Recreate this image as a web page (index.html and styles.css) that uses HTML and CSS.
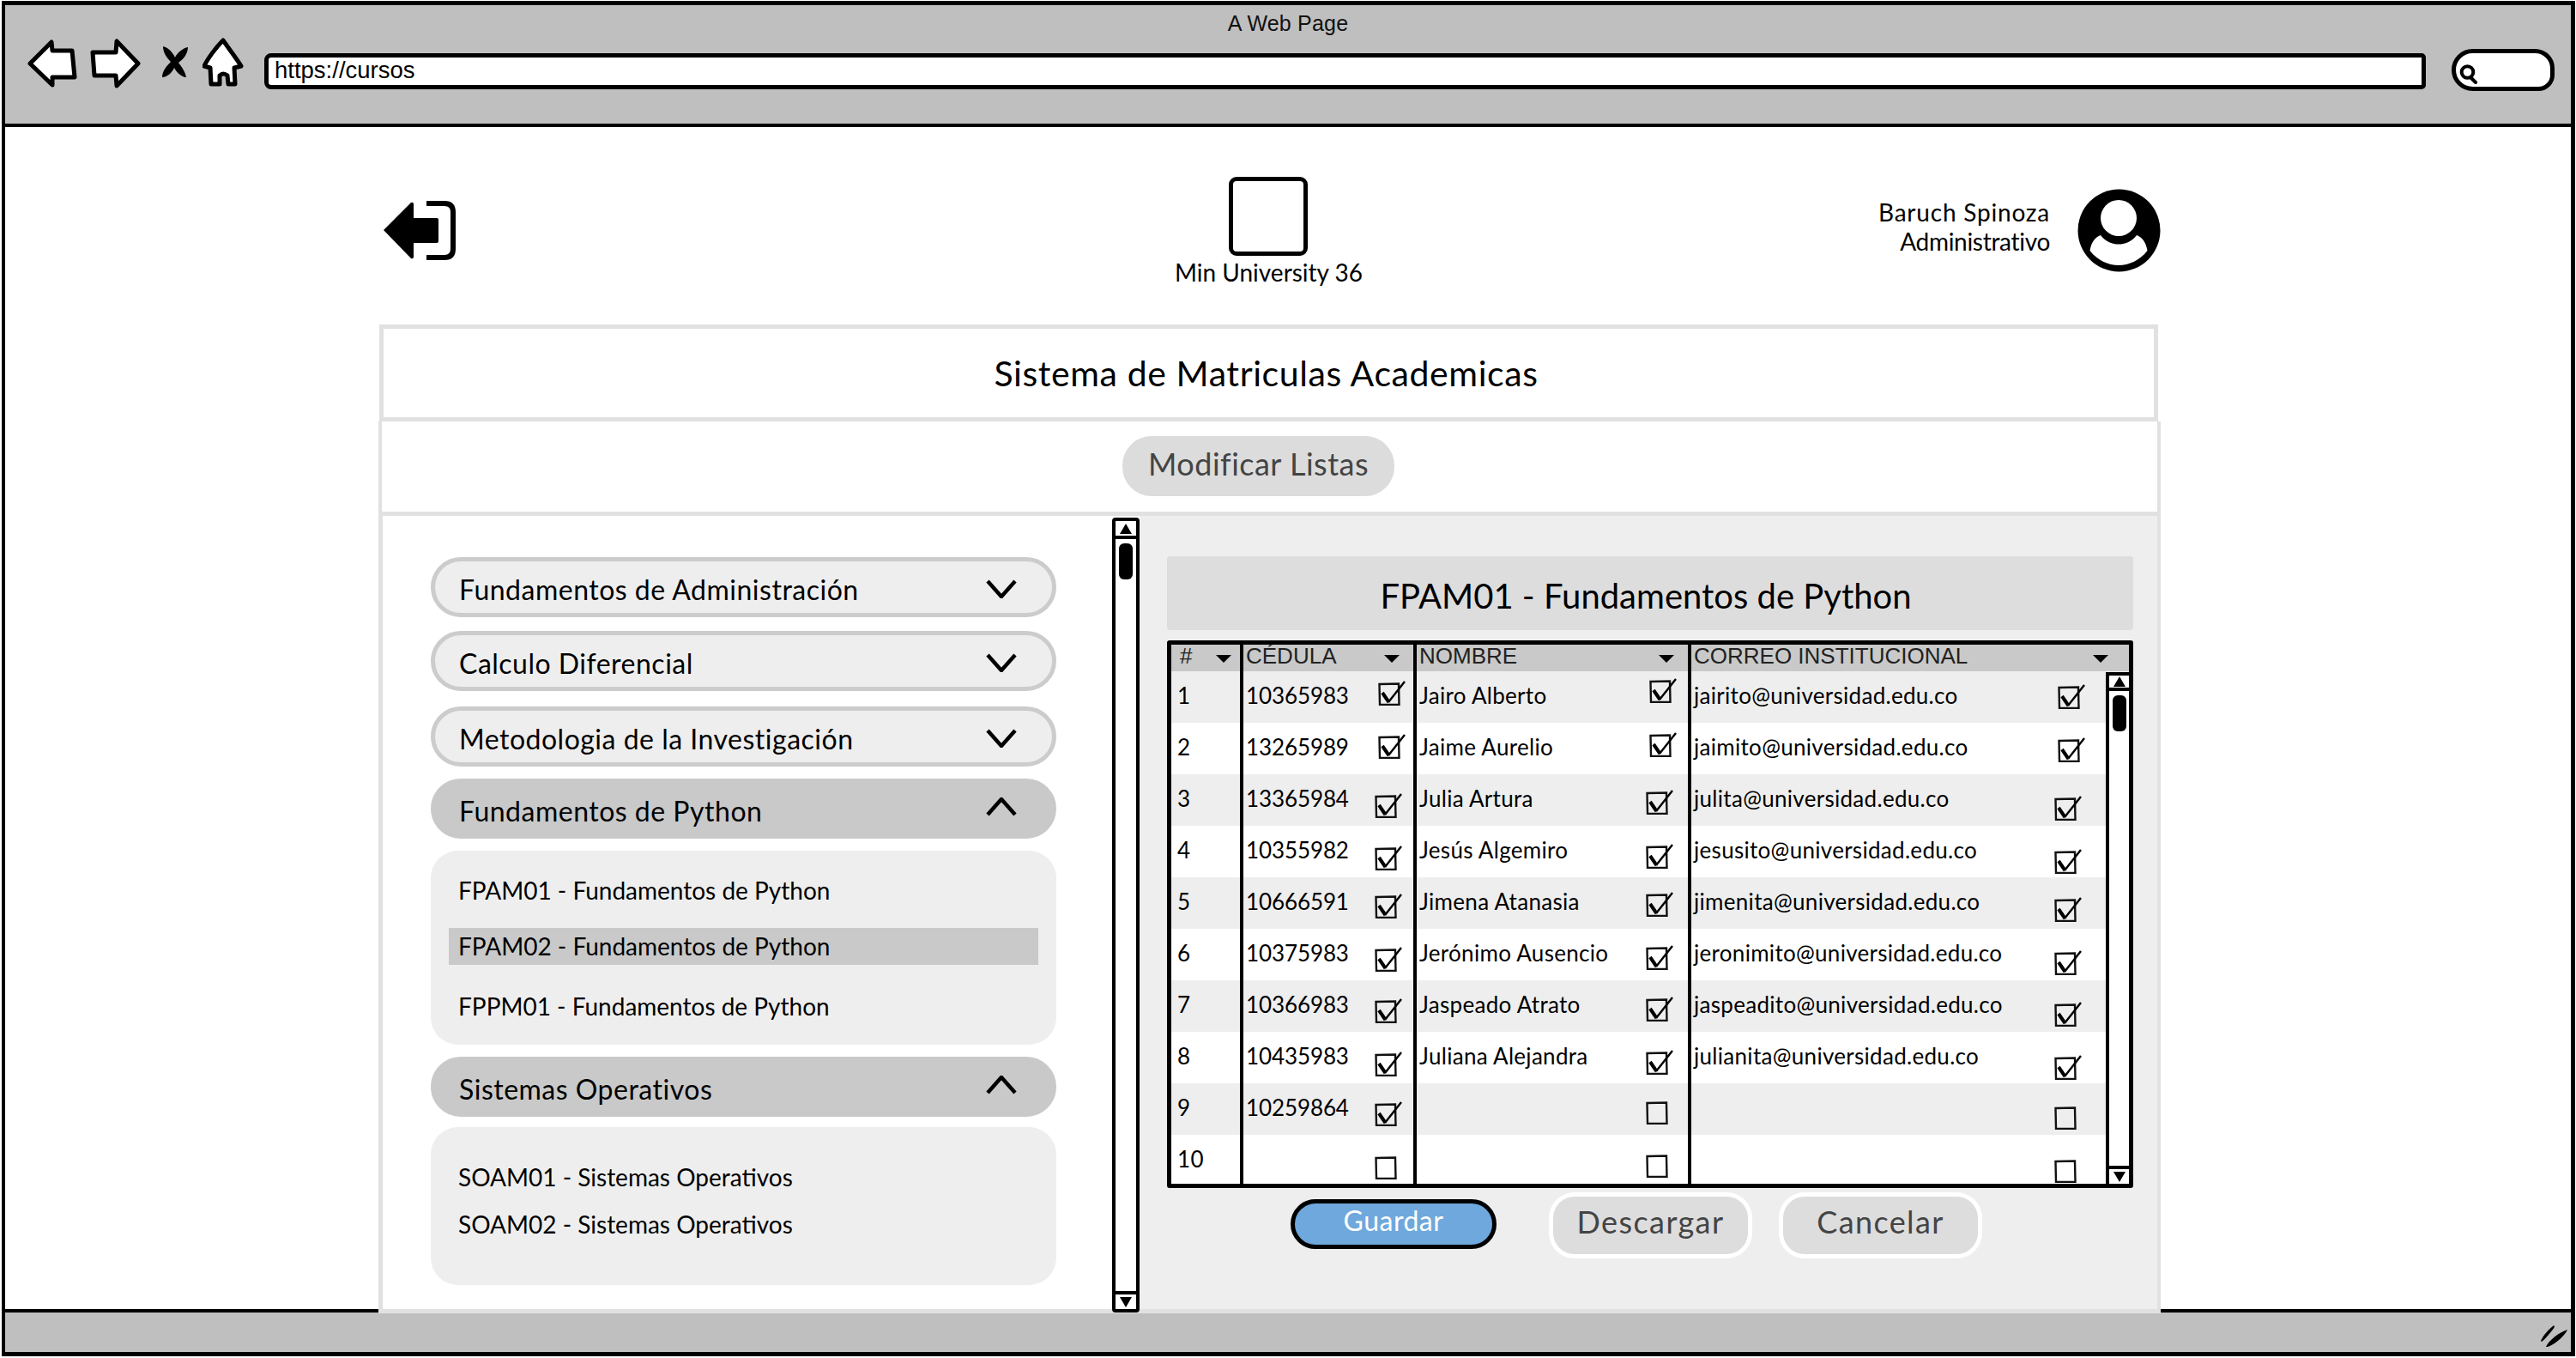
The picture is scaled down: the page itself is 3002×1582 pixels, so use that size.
FILE: index.html
```html
<!DOCTYPE html>
<html lang="es">
<head>
<meta charset="utf-8">
<title>Sistema de Matriculas Academicas</title>
<link rel="stylesheet" href="styles.css">
</head>
<body>
<svg class="defs" width="0" height="0" aria-hidden="true">
  <symbol id="cb-on" viewBox="0 0 34 29">
    <path d="M1.5 4 L24 3.5 L24.5 28 L2 28 Z" fill="none" stroke="#111" stroke-width="2.4"/>
    <path d="M5 14 L12.5 25" fill="none" stroke="#000" stroke-width="4"/>
    <path d="M12 25 L31 1" fill="none" stroke="#000" stroke-width="2.4"/>
  </symbol>
  <symbol id="cb-off" viewBox="0 0 34 29">
    <path d="M1.5 4 L24 3.5 L24.5 28 L2 28 Z" fill="none" stroke="#111" stroke-width="2.4"/>
  </symbol>
</svg>
<div class="window">
  <header class="topbar">
    <div class="win-title">A Web Page</div>
    <div class="toolbar">
      <svg class="ico-back" viewBox="0 0 58 56"><path d="M3 28 L28 3 L29 13 L52 13 L55 44 L29 44 L29 53 Z" fill="#fff" stroke="#000" stroke-width="5" stroke-linejoin="round"/></svg>
      <svg class="ico-fwd" viewBox="0 0 60 58"><path d="M57 29 L32 3 L31 16 L4 16 L6 43 L31 43 L32 55 Z" fill="#fff" stroke="#000" stroke-width="5" stroke-linejoin="round"/></svg>
      <svg class="ico-x" viewBox="0 0 32 38"><path d="M2 1 C8 2 14 9 16 14 C18 9 25 3 31 2 C31 9 26 16 20 20 C24 25 28 31 29 37 C23 37 17 30 15 26 C13 31 7 37 1 37 C1 30 6 24 11 19 C6 14 2 8 2 1 Z" fill="#000"/></svg>
      <svg class="ico-home" viewBox="0 0 48 58"><path d="M24 3 C31 13 41 26 45 33 L37 35 L38 54 L30 54 L29 44 Q24 40 20 44 L20 54 L10 54 L9 35 L2 33 C6 24 16 11 24 3 Z" fill="#fff" stroke="#000" stroke-width="5" stroke-linejoin="round"/></svg>
      <div class="url">https://cursos</div>
      <div class="search">
        <svg class="ico-search" viewBox="0 0 22 24"><circle cx="9.5" cy="10" r="6.8" fill="none" stroke="#000" stroke-width="4"/><path d="M13 16 L19 22" stroke="#000" stroke-width="4" stroke-linecap="round"/></svg>
      </div>
    </div>
  </header>

  <main class="content">
    <div class="sheet">
      <div class="brandbar">
        <svg class="exit" viewBox="0 0 85 69"><path d="M1 34 L33 2 Q36 1 36 4 L36 20 L63 20 Q65 20 65 22 L65 47 Q65 49 63 49 L36 49 L36 65 Q36 68 33 67 Z" fill="#000"/><path d="M51 3 L72 3 Q82 3 82 13 L82 56 Q82 66 72 66 L51 66" fill="none" stroke="#000" stroke-width="6"/></svg>
        <div class="brand">
          <div class="logo"></div>
          <div class="brand-name">Min University 36</div>
        </div>
        <div class="user">
          <div class="user-text">
            <div>Baruch Spinoza</div>
            <div class="user-role">Administrativo</div>
          </div>
          <svg class="avatar" viewBox="0 0 97 97"><circle cx="48.5" cy="48.5" r="48" fill="#000"/><circle cx="48" cy="34" r="21" fill="#fff"/><path d="M14.5 72 C16 62 21 56 27 54 C33 62 41 64.5 48 64.5 C55 64.5 63 62 69 54 C75 56 80 62 81.5 72 C73 83 60 89 48 89 C36 89 23 83 14.5 72 Z" fill="#fff"/></svg>
        </div>
      </div>

      <div class="panel-title">Sistema de Matriculas Academicas</div>
      <div class="panel-actions"><button class="pill-modify" type="button">Modificar Listas</button></div>

      <div class="panel-main">
        <section class="courses">
          <div class="acc">
            <div class="acc-head"><span>Fundamentos de Administración</span><svg class="chev" viewBox="0 0 36 22"><path d="M2 2 L18 20 L34 2" fill="none" stroke="#000" stroke-width="4.5"/></svg></div>
            <div class="acc-head gap-16"><span>Calculo Diferencial</span><svg class="chev" viewBox="0 0 36 22"><path d="M2 2 L18 20 L34 2" fill="none" stroke="#000" stroke-width="4.5"/></svg></div>
            <div class="acc-head gap-18"><span>Metodologia de la Investigación</span><svg class="chev" viewBox="0 0 36 22"><path d="M2 2 L18 20 L34 2" fill="none" stroke="#000" stroke-width="4.5"/></svg></div>
            <div class="acc-head open"><span>Fundamentos de Python</span><svg class="chev" viewBox="0 0 36 22"><path d="M2 20 L18 2 L34 20" fill="none" stroke="#000" stroke-width="4.5"/></svg></div>
            <div class="acc-body body-python">
              <div class="sub">FPAM01 - Fundamentos de Python</div>
              <div class="sub selected">FPAM02 - Fundamentos de Python</div>
              <div class="sub last">FPPM01 - Fundamentos de Python</div>
            </div>
            <div class="acc-head open"><span>Sistemas Operativos</span><svg class="chev" viewBox="0 0 36 22"><path d="M2 20 L18 2 L34 20" fill="none" stroke="#000" stroke-width="4.5"/></svg></div>
            <div class="acc-body body-so">
              <div class="sub">SOAM01 - Sistemas Operativos</div>
              <div class="sub">SOAM02 - Sistemas Operativos</div>
            </div>
          </div>
        </section>

        <div class="scroll scroll-main">
          <div class="sc-up"><svg viewBox="0 0 14 12"><path d="M7 0 L14 12 L0 12 Z" fill="#000"/></svg></div>
          <div class="sc-thumb"></div>
          <div class="sc-down"><svg viewBox="0 0 14 12"><path d="M0 0 L14 0 L7 12 Z" fill="#000"/></svg></div>
        </div>

        <section class="roster">
          <h2 class="roster-title">FPAM01 - Fundamentos de Python</h2>
          <div class="table">
            <div class="thead">
              <div class="th"><span class="hash">#</span><i class="caret"></i></div>
              <div class="th"><span>CÉDULA</span><i class="caret"></i></div>
              <div class="th"><span>NOMBRE</span><i class="caret"></i></div>
              <div class="th th-last"><span>CORREO INSTITUCIONAL</span><i class="caret"></i></div>
            </div>
            <div class="tbody">
              <div class="rows">
                <div class="row"><div class="td num">1</div><div class="td"><span>10365983</span><svg class="cb t14 right-4"><use href="#cb-on"/></svg></div><div class="td"><span>Jairo Alberto</span><svg class="cb t11 right-4"><use href="#cb-on"/></svg></div><div class="td"><span>jairito@universidad.edu.co</span><svg class="cb t18 right-4"><use href="#cb-on"/></svg></div></div>
                <div class="row"><div class="td num">2</div><div class="td"><span>13265989</span><svg class="cb t16 right-4"><use href="#cb-on"/></svg></div><div class="td"><span>Jaime Aurelio</span><svg class="cb t14 right-4"><use href="#cb-on"/></svg></div><div class="td"><span>jaimito@universidad.edu.co</span><svg class="cb t20 right-4"><use href="#cb-on"/></svg></div></div>
                <div class="row"><div class="td num">3</div><div class="td"><span>13365984</span><svg class="cb t25"><use href="#cb-on"/></svg></div><div class="td"><span>Julia Artura</span><svg class="cb t21"><use href="#cb-on"/></svg></div><div class="td"><span>julita@universidad.edu.co</span><svg class="cb t28"><use href="#cb-on"/></svg></div></div>
                <div class="row"><div class="td num">4</div><div class="td"><span>10355982</span><svg class="cb t26"><use href="#cb-on"/></svg></div><div class="td"><span>Jesús Algemiro</span><svg class="cb t24"><use href="#cb-on"/></svg></div><div class="td"><span>jesusito@universidad.edu.co</span><svg class="cb t30"><use href="#cb-on"/></svg></div></div>
                <div class="row"><div class="td num">5</div><div class="td"><span>10666591</span><svg class="cb t22"><use href="#cb-on"/></svg></div><div class="td"><span>Jimena Atanasia</span><svg class="cb t20"><use href="#cb-on"/></svg></div><div class="td"><span>jimenita@universidad.edu.co</span><svg class="cb t26"><use href="#cb-on"/></svg></div></div>
                <div class="row"><div class="td num">6</div><div class="td"><span>10375983</span><svg class="cb t24"><use href="#cb-on"/></svg></div><div class="td"><span>Jerónimo Ausencio</span><svg class="cb t22"><use href="#cb-on"/></svg></div><div class="td"><span>jeronimito@universidad.edu.co</span><svg class="cb t28"><use href="#cb-on"/></svg></div></div>
                <div class="row"><div class="td num">7</div><div class="td"><span>10366983</span><svg class="cb t24"><use href="#cb-on"/></svg></div><div class="td"><span>Jaspeado Atrato</span><svg class="cb t22"><use href="#cb-on"/></svg></div><div class="td"><span>jaspeadito@universidad.edu.co</span><svg class="cb t28"><use href="#cb-on"/></svg></div></div>
                <div class="row"><div class="td num">8</div><div class="td"><span>10435983</span><svg class="cb t26"><use href="#cb-on"/></svg></div><div class="td"><span>Juliana Alejandra</span><svg class="cb t24"><use href="#cb-on"/></svg></div><div class="td"><span>julianita@universidad.edu.co</span><svg class="cb t30"><use href="#cb-on"/></svg></div></div>
                <div class="row"><div class="td num">9</div><div class="td"><span>10259864</span><svg class="cb t24"><use href="#cb-on"/></svg></div><div class="td"><span></span><svg class="cb t22"><use href="#cb-off"/></svg></div><div class="td"><span></span><svg class="cb t28"><use href="#cb-off"/></svg></div></div>
                <div class="row"><div class="td num">10</div><div class="td"><span></span><svg class="cb t26"><use href="#cb-off"/></svg></div><div class="td"><span></span><svg class="cb t24"><use href="#cb-off"/></svg></div><div class="td"><span></span><svg class="cb t30"><use href="#cb-off"/></svg></div></div>
              </div>
              <div class="scroll scroll-table">
                <div class="sc-up"><svg viewBox="0 0 14 12"><path d="M7 0 L14 12 L0 12 Z" fill="#000"/></svg></div>
                <div class="sc-thumb"></div>
                <div class="sc-down"><svg viewBox="0 0 14 12"><path d="M0 0 L14 0 L7 12 Z" fill="#000"/></svg></div>
              </div>
            </div>
          </div>
          <div class="actions">
            <button class="btn btn-save" type="button">Guardar</button>
            <button class="btn btn-ghost btn-dl" type="button">Descargar</button>
            <button class="btn btn-ghost btn-cancel" type="button">Cancelar</button>
          </div>
        </section>
      </div>
    </div>
  </main>

  <footer class="statusbar">
    <svg class="grip" viewBox="0 0 32 25"><path d="M1 18 C4 11 11 4 16 0 C18 1 16 4 14 6 C10 11 6 16 2 19 Z M7 25 C10 18 22 8 32 5 C30 10 20 21 9 25 Z" fill="#000"/></svg>
  </footer>
</div>
</body>
</html>
```

FILE: styles.css
```css
* { box-sizing: border-box; }
html, body { margin: 0; padding: 0; background: #fff; }
body { width: 3002px; height: 1582px; overflow: hidden; font-family: "Lato", "Noto Sans", sans-serif; color: #000; }
.defs { position: absolute; }

.window { margin: 1px 0 0 2px; width: 2999px; height: 1579px; border: solid #000; border-width: 5px 5px 5px 4px; display: flex; flex-direction: column; }

.topbar { height: 142px; flex: none; background: #bfbfbf; border-bottom: 4px solid #000; font-family: "Liberation Sans", Arial, sans-serif; }
.win-title { font-size: 25px; line-height: 30px; text-align: center; padding-top: 6px; height: 40px; color: #111; letter-spacing: .2px; }
.toolbar { display: flex; align-items: center; padding-left: 26px; height: 60px; }
.ico-back { width: 58px; height: 56px; flex: none; margin-top: -4px; }
.ico-fwd { width: 60px; height: 58px; flex: none; margin-left: 14px; margin-top: -4px; }
.ico-x { width: 32px; height: 38px; flex: none; margin-left: 24px; margin-top: -8px; }
.ico-home { width: 48px; height: 58px; flex: none; margin-left: 16px; margin-top: -6px; }
.url { flex: 1; margin-left: 24px; height: 42px; background: #fff; border: 5px solid #000; border-radius: 8px 5px 5px 8px; font-size: 27.5px; line-height: 30px; padding-left: 7px; color: #000; margin-top: 14px; }
.search { width: 120px; height: 49px; margin-left: 30px; margin-right: 19px; background: #fff; border: 5px solid #000; border-radius: 26px 24px 20px 26px; padding: 12px 0 0 4px; margin-top: 10px; }
.ico-search { display: block; width: 22px; height: 24px; }

.content { flex: 1; min-height: 0; background: #fff; }
.sheet { margin-left: 435px; width: 2077px; position: relative; z-index: 1; }

.brandbar { height: 230px; padding-top: 58px; display: grid; grid-template-columns: 1fr auto 1fr; align-items: center; align-content: start; }
.exit { width: 85px; height: 69px; margin-left: 5px; display: block; }
.brand { display: flex; flex-direction: column; align-items: center; height: 124px; margin-right: 2px; }
.logo { width: 92px; height: 92px; flex: none; border: 5px solid #000; border-radius: 9px; }
.brand-name { font-size: 28px; line-height: 36px; margin-top: 1px; white-space: nowrap; }
.user { display: flex; justify-content: flex-end; align-items: center; }
.user-text { text-align: right; font-size: 28px; line-height: 34px; margin-right: 32px; margin-top: -8px; letter-spacing: .8px; }
.user-role { letter-spacing: -.3px; }
.avatar { width: 97px; height: 97px; display: block; }

.panel-title { height: 113px; margin: 0 3px 0 1px; border: 5px solid #e1e1e1; display: flex; align-items: center; justify-content: center; font-size: 41px; line-height: 50px; padding-right: 6px; letter-spacing: .6px; }
.panel-actions { height: 110px; border: solid #e1e1e1; border-width: 0 4px 5px 4px; padding: 17px 0 0 863px; }
.pill-modify { display: block; width: 317px; height: 70px; border: 0; border-radius: 34px; background: #dcdcdc; color: #444; font: inherit; font-size: 36px; line-height: 56px; padding: 0 0 6px; letter-spacing: .5px; }

.panel-main { height: 929px; border: solid #e1e1e1; border-width: 0 4px 5px 5px; display: flex; align-items: flex-start; }
.courses { width: 850px; flex: none; padding: 48px 0 0 56px; }
.acc { width: 729px; display: flex; flex-direction: column; gap: 14px; }
.acc-head { height: 70px; border: 5px solid #ccc; border-radius: 35px; background: #eee; display: flex; align-items: center; justify-content: space-between; padding: 0 41px 8px 28px; font-size: 32px; letter-spacing: .5px; }
.acc-head span { padding-top: 12px; white-space: nowrap; }
.gap-16 { margin-top: 2px; }
.gap-18 { margin-top: 4px; }
.acc-head.open { background: #c9c9c9; border-color: #c9c9c9; }
.chev { width: 36px; height: 22px; flex: none; margin-top: 12px; }
.acc-head.open .chev { margin-top: 4px; }
.acc-body { background: #eee; border-radius: 32px; padding: 0 21px; }
.body-python { height: 226px; padding-top: 25px; }
.body-so { height: 184px; padding-top: 37px; margin-top: -2px; }
.sub { height: 43px; line-height: 43px; padding-left: 11px; font-size: 28px; white-space: nowrap; }
.sub.selected { background: #c9c9c9; margin-top: 22px; }
.sub.last { margin-top: 27px; }
.body-so .sub + .sub { margin-top: 12px; }

.scroll { display: flex; flex-direction: column; background: #fff; }
.sc-up, .sc-down { height: 21px; flex: none; display: flex; align-items: center; justify-content: center; }
.sc-up svg, .sc-down svg { width: 14px; height: 12px; display: block; }
.sc-up { border-bottom: 4px solid #000; }
.sc-down { border-top: 4px solid #000; margin-top: auto; }
.sc-thumb { height: 42px; width: 16px; margin: 5px auto 0; background: #000; border-radius: 6px; }
.scroll-main { width: 32px; height: 926px; flex: none; margin: 2px 0 -5px 0; border: 4px solid #000; border-radius: 4px; position: relative; z-index: 1; }

.roster { flex: 1; align-self: stretch; background: #eee; padding: 47px 28px 0 32px; }
.roster-title { height: 86px; margin: 0; padding-right: 10px; background: #ddd; border-radius: 4px; font-weight: 400; font-size: 40px; line-height: 92px; text-align: center; }
.table { margin-top: 12px; height: 638px; border: 5px solid #000; border-radius: 3px; display: flex; flex-direction: column; font-size: 26px; position: relative; }
.thead { height: 31px; flex: none; display: grid; grid-template-columns: 84px 202px 320px 1fr; background: #c9c9c9; font-family: "Liberation Sans", Arial, sans-serif; font-size: 26px; color: #222; }
.th { display: flex; align-items: center; justify-content: space-between; border-right: 4px solid #000; padding-left: 3px; line-height: 27px; }
.th > span { margin-top: -5px; }
.th:first-child { padding-left: 10px; }
.th-last { border-right: 0; }
.caret { width: 0; height: 0; border: solid transparent; border-width: 9px 9px 0; border-top-color: #000; margin-right: 16px; margin-top: 2px; }
.th:first-child .caret { margin-right: 10px; }
.th-last .caret { margin-right: 24px; }
.tbody { flex: 1; min-height: 0; display: flex; }
.rows { width: 1089px; flex: none; overflow: hidden; }
.row { height: 60px; display: grid; grid-template-columns: 84px 202px 320px 1fr; background: #fff; }
.row:nth-child(odd) { background: #eee; }
.td { display: flex; align-items: flex-start; justify-content: space-between; border-right: 4px solid #000; padding-left: 3px; line-height: 56px; white-space: nowrap; letter-spacing: .3px; }
.td:nth-child(2) { letter-spacing: -.1px; }
.td:last-child { border-right: 0; }
.td.num { padding-left: 7px; }
.cb { width: 34px; height: 29px; flex: none; margin-right: 11px; display: block; }
.td:nth-child(3) .cb { margin-right: 15px; }
.td:last-child .cb { margin-right: 26px; }
.right-4 { transform: translateX(4px); }
.t11 { margin-top: 8px; }
.t14 { margin-top: 11px; }
.t16 { margin-top: 13px; }
.t18 { margin-top: 15px; }
.t20 { margin-top: 17px; }
.t21 { margin-top: 18px; }
.t22 { margin-top: 19px; }
.t24 { margin-top: 21px; }
.t25 { margin-top: 22px; }
.t26 { margin-top: 23px; }
.t28 { margin-top: 25px; }
.t30 { margin-top: 27px; }
.scroll-table { flex: 1; min-width: 0; border-left: 4px solid #000; border-top: 4px solid #000; margin-top: 1px; }
.scroll-table .sc-up { height: 18px; }

.actions { display: flex; align-items: center; margin: 5px 0 0 144px; height: 77px; }
.btn { border-radius: 30px; font: inherit; padding: 0 0 6px; }
.btn-save { width: 240px; height: 58px; background: #6fa8dc; color: #fff; border: 5px solid #000; font-size: 32px; margin-top: -4px; padding-bottom: 8px; letter-spacing: .5px; }
.btn-ghost { width: 237px; height: 77px; background: #ddd; color: #444; border: 5px solid #fff; font-size: 36px; padding-bottom: 10px; letter-spacing: 1.4px; }
.btn-dl { margin-left: 61px; }
.btn-cancel { margin-left: 31px; }

.statusbar { height: 50px; flex: none; background: #bfbfbf; border-top: 4px solid #000; display: flex; justify-content: flex-end; align-items: flex-start; padding: 15px 4px 0 0; }
.grip { width: 32px; height: 25px; display: block; }
```
